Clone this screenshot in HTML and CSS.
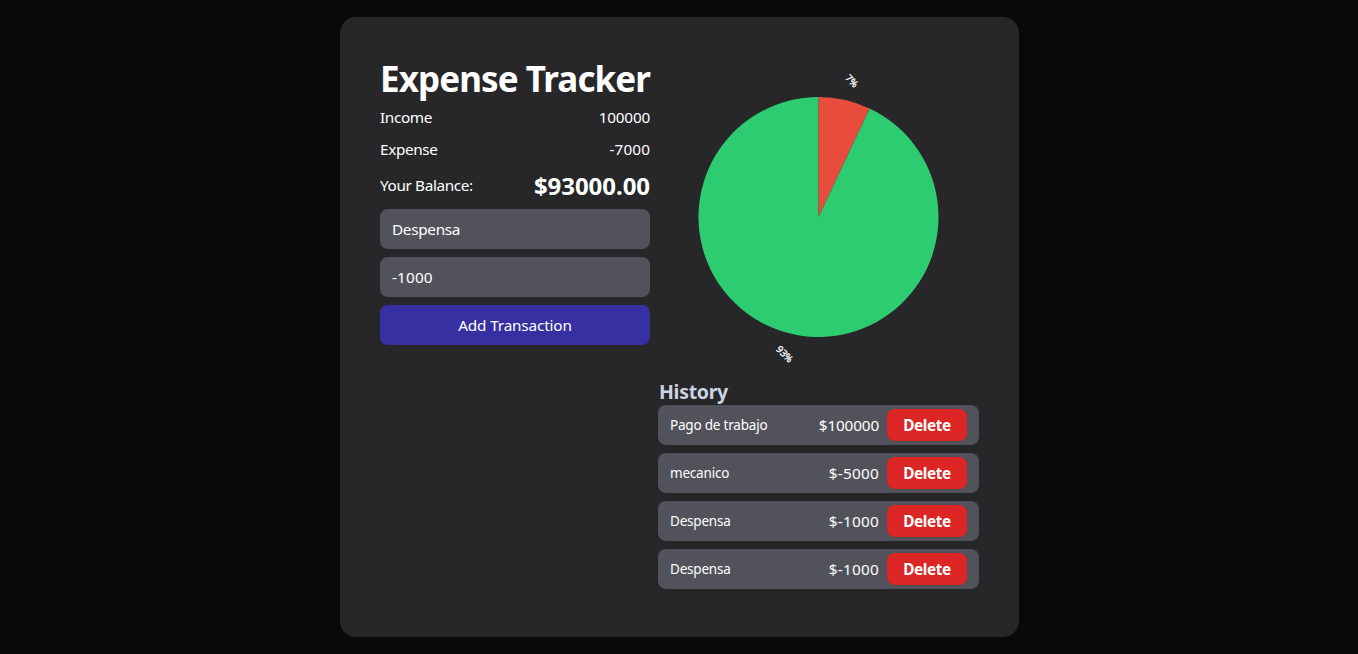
FILE: index.html
```html
<!DOCTYPE html>
<html lang="en">
<head>
<meta charset="utf-8">
<title>Expense Tracker</title>
<link rel="stylesheet" href="styles.css">
</head>
<body>
<main class="card">
  <section class="summary">
    <h1 class="title">Expense Tracker</h1>
    <div class="row"><span class="label">Income</span><span class="num">100000</span></div>
    <div class="row"><span class="label">Expense</span><span class="num num-negative">-7000</span></div>
    <div class="row row-balance"><span class="label">Your Balance:</span><strong class="balance">$93000.00</strong></div>
    <form class="form">
      <input class="field" type="text" value="Despensa" aria-label="Description">
      <input class="field field-amount" type="text" value="-1000" aria-label="Amount">
      <button class="add" type="button">Add Transaction</button>
    </form>
  </section>
  <section class="details">
    <svg class="chart" viewBox="0 0 400 400" role="img" aria-label="Expenses 7%, income 93%">
      <path fill="#e74c3c" d="M200 200V50A150 150 0 0 1 263.87 64.28Z"/>
      <path fill="#2ecc71" d="M200 200L263.87 64.28A150 150 0 1 1 200 50Z"/>
      <path class="seam" d="M200 50V200L263.87 64.28"/>
      <text class="pct" transform="translate(241.5 30) rotate(45)" y="4">7%</text>
      <text class="pct" transform="translate(157.5 371.5) rotate(45)" y="4">93%</text>
    </svg>
    <h2 class="heading">History</h2>
    <ul class="history">
      <li class="item"><p class="name">Pago de trabajo</p><span class="amount">$100000</span><button class="delete">Delete</button></li>
      <li class="item"><p class="name">mecanico</p><span class="amount amount-negative">$-5000</span><button class="delete">Delete</button></li>
      <li class="item"><p class="name">Despensa</p><span class="amount amount-negative">$-1000</span><button class="delete">Delete</button></li>
      <li class="item"><p class="name">Despensa</p><span class="amount amount-negative">$-1000</span><button class="delete">Delete</button></li>
    </ul>
  </section>
</main>
</body>
</html>
```
FILE: styles.css
```css
* { box-sizing: border-box; margin: 0; padding: 0; }
body {
  height: 654px;
  padding: 17px 0 0 340px;
  background: #09090b;
  color: #fff;
  font: 15.3px/24px "Noto Sans", sans-serif;
  overflow: hidden;
}
.card {
  display: flex;
  gap: 8px;
  width: 679px;
  height: 620px;
  padding: 40px;
  border-radius: 16px;
  background: #27272a;
}
.summary { width: 270px; }
.title { margin-bottom: 8px; font-size: 35px; line-height: 44px; height: 40px; font-weight: 700; letter-spacing: -0.92px; white-space: nowrap; }
.row { display: flex; justify-content: space-between; height: 24px; margin-bottom: 8px; }
.row-balance { height: 32px; align-items: center; }
.label { letter-spacing: -0.36px; }
.num { letter-spacing: -0.2px; }
.num-negative { letter-spacing: 0.1px; }
.balance { font-size: 24px; line-height: 32px; letter-spacing: -0.05px; padding-top: 2px; }
.form { display: flex; flex-direction: column; gap: 8px; }
.field, .add {
  height: 40px;
  padding: 0 12px;
  border: 0;
  border-radius: 8px;
  background: #52525b;
  color: #fff;
  font: inherit;
  letter-spacing: -0.3px;
}
.field-amount { letter-spacing: 0.15px; }
.add { background: #3730a3; letter-spacing: -0.15px; }
.details { width: 321px; }
.chart { display: block; width: 321px; height: 320px; }
.seam { fill: none; stroke: #6f7b4e; stroke-width: 0.8; }
.pct { fill: #fff; stroke: #fff; stroke-width: 0.4; font-size: 12px; text-anchor: middle; }
.heading { color: #cbd5e1; font-size: 19.5px; line-height: 30px; height: 28px; font-weight: 700; letter-spacing: -0.3px; padding-left: 1px; }
.history { list-style: none; display: flex; flex-direction: column; gap: 8px; }
.item { display: flex; align-items: center; height: 40px; padding: 0 12px; border-radius: 8px; background: #52525b; }
.name { flex: 1; font-size: 13.5px; letter-spacing: -0.2px; }
.amount { margin-right: 8px; letter-spacing: -0.15px; }
.amount-negative { letter-spacing: 0.25px; }
.delete { width: 80px; height: 32px; border: 0; border-radius: 8px; background: #dc2626; color: #fff; font: inherit; font-weight: 700; letter-spacing: -0.4px; }
```
